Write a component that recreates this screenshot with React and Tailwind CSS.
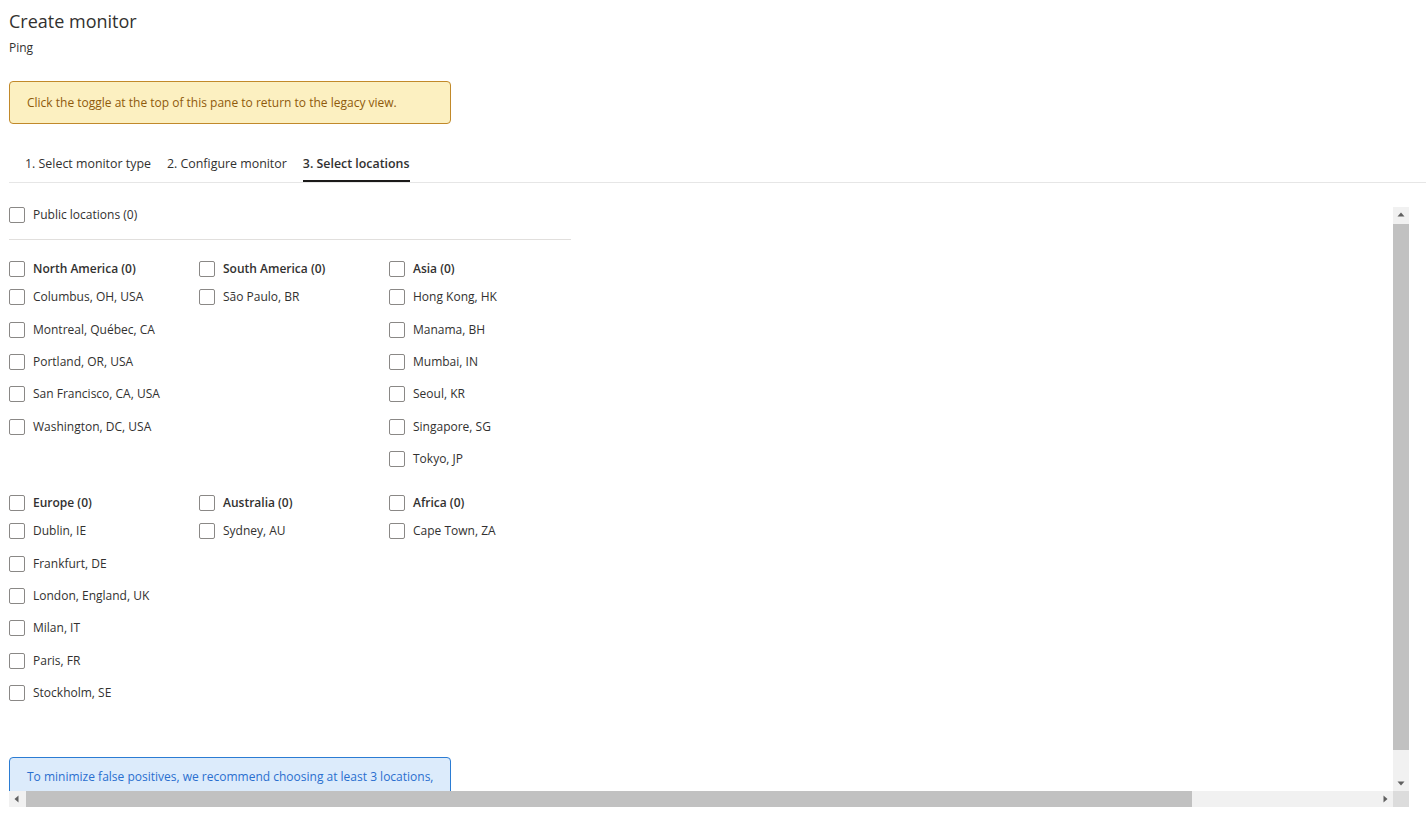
import React from 'react';

const groups = [
    [
        { name: 'North America', items: ['Columbus, OH, USA', 'Montreal, Québec, CA', 'Portland, OR, USA', 'San Francisco, CA, USA', 'Washington, DC, USA'] },
        { name: 'South America', items: ['São Paulo, BR'] },
        { name: 'Asia', items: ['Hong Kong, HK', 'Manama, BH', 'Mumbai, IN', 'Seoul, KR', 'Singapore, SG', 'Tokyo, JP'] },
    ],
    [
        { name: 'Europe', items: ['Dublin, IE', 'Frankfurt, DE', 'London, England, UK', 'Milan, IT', 'Paris, FR', 'Stockholm, SE'] },
        { name: 'Australia', items: ['Sydney, AU'] },
        { name: 'Africa', items: ['Cape Town, ZA'] },
    ],
];

const Box = () => (
    <span className="w-4 h-4 shrink-0 rounded-[2px] border border-[#8a8886] bg-white" />
);

const Check = ({ label, bold }) => (
    <label className="flex items-center gap-2 leading-4 cursor-pointer">
        <Box />
        <span className={bold ? 'font-semibold text-[#323130]' : 'text-[#323130]'}>{label}</span>
    </label>
);

const Region = ({ region }) => (
    <div className="flex flex-col">
        <div className="h-6 flex items-center">
            <Check label={`${region.name} (0)`} bold />
        </div>
        <div className="flex flex-col">
            {region.items.map((item) => (
                <div key={item} className="h-[32.4px] flex items-center">
                    <Check label={item} />
                </div>
            ))}
        </div>
    </div>
);

const Tri = ({ dir }) => {
    const pts = {
        up: '4.5,9.5 8,5.5 11.5,9.5',
        down: '4.5,6.5 8,10.5 11.5,6.5',
        left: '9.5,4.5 5.5,8 9.5,11.5',
        right: '6.5,4.5 10.5,8 6.5,11.5',
    };
    return (
        <svg width="16" height="16" viewBox="0 0 16 16" className="shrink-0">
            <polygon points={pts[dir]} fill="#606060" />
        </svg>
    );
};

export default function App() {
    return (
        <div className="h-[824px] overflow-hidden bg-white pl-[9px] text-[12px] text-[#323130]" style={{ fontFamily: '"Open Sans", "Noto Sans", sans-serif' }}>
            {/* Header */}
            <h1 className="pt-[7px] text-[18px] leading-7 text-[#323130]">Create monitor</h1>
            <div className="mt-[5px] text-xs leading-4">Ping</div>

            {/* Legacy notice */}
            <div className="mt-[25px] w-[442px] h-[43px] flex items-center px-[17px] rounded border border-[#c1892a] bg-[#fcf0c1] text-[#8f5a0b]">
                Click the toggle at the top of this pane to return to the legacy view.
            </div>

            {/* Steps */}
            <div className="mt-[30px] flex px-2 border-b border-[#e6e6e6] text-[12.4px]">
                {['1. Select monitor type', '2. Configure monitor', '3. Select locations'].map((t, i) => (
                    <div key={t} className="px-2">
                        <div className={`h-5 leading-5 ${i === 2 ? 'font-semibold' : ''}`}>{t}</div>
                        <div className={`mt-[6px] h-[2px] ${i === 2 ? 'bg-[#1b1a19]' : 'bg-transparent'}`} />
                    </div>
                ))}
            </div>

            {/* Locations scroll pane */}
            <div className="mt-6 mr-[17px] grid grid-cols-[1fr_16px] grid-rows-[584px_16px]">
                <div className="overflow-hidden">
                    <div className="h-4 flex items-center">
                        <Check label="Public locations (0)" />
                    </div>
                    <div className="mt-4 w-[562px] border-t border-[#e1dfdd]" />

                    <div className="mt-[17px] flex flex-col gap-[15.6px]">
                        {groups.map((row, idx) => (
                            <div key={idx} className="grid grid-cols-[190px_190px_190px] items-start">
                                {row.map((r) => (
                                    <Region key={r.name} region={r} />
                                ))}
                            </div>
                        ))}
                    </div>

                    <div className="mt-12 w-[442px] rounded border border-[#2b7cd3] bg-[#dcebfb] pl-[17px] pr-2 pt-[9px] pb-3 text-[#2a6fcf] leading-5 whitespace-nowrap">
                        To minimize false positives, we recommend choosing at least 3 locations,
                        <br />
                        with at least one location in each region where you have customers.
                    </div>
                </div>

                {/* vertical scrollbar */}
                <div className="flex flex-col bg-[#f1f1f1]">
                    <Tri dir="up" />
                    <div className="h-[526px] bg-[#c1c1c1] mt-px" />
                    <div className="flex-1" />
                    <Tri dir="down" />
                </div>

                {/* horizontal scrollbar */}
                <div className="flex items-center bg-[#f1f1f1]">
                    <Tri dir="left" />
                    <div className="ml-px w-[1166px] h-4 bg-[#c1c1c1]" />
                    <div className="flex-1" />
                    <Tri dir="right" />
                </div>
                <div className="bg-[#dcdcdc]" />
            </div>
        </div>
    );
}
